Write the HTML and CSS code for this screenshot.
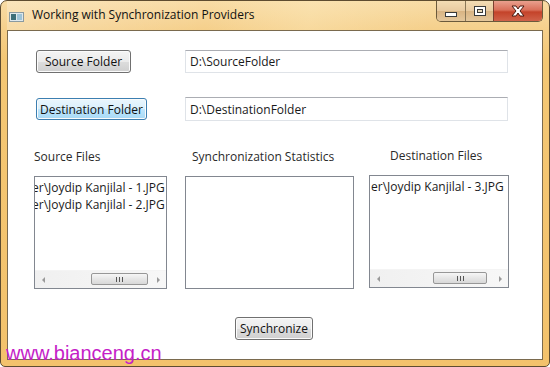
FILE: index.html
```html
<!DOCTYPE html>
<html lang="en">
<head>
    <meta charset="UTF-8">
    <title>Working with Synchronization Providers</title>
    <link rel="stylesheet" href="styles.css">
</head>
<body>

    <div class="window">

        <div class="titlebar">
            <svg class="appicon" width="15" height="10" viewBox="0 0 15 10">
                <rect x="0.5" y="0.5" width="14" height="9" fill="#dfe8ec" stroke="#8a9aa0"/>
                <rect x="2" y="2" width="5" height="6" fill="#3c6e78"/>
                <rect x="8" y="2" width="5" height="6" fill="#9ec4d8"/>
            </svg>
            <span class="title">Working with Synchronization Providers</span>

            <div class="captions">
                <div class="cap cap-min">
                    <svg width="12" height="6" viewBox="0 0 12 6"><rect x="0.5" y="1.5" width="11" height="4" fill="#fff" stroke="#3a3a3a"/></svg>
                </div>
                <div class="cap cap-max">
                    <svg width="12" height="10" viewBox="0 0 12 10"><rect x="0.5" y="0.5" width="11" height="9" fill="#fff" stroke="#3a3a3a"/><rect x="3.5" y="3.5" width="5" height="3" fill="#e8d8b8" stroke="#3a3a3a"/></svg>
                </div>
                <div class="cap cap-close">
                    <svg width="16" height="12" viewBox="0 0 16 12"><path d="M2 1 L6 1 L8 4 L10 1 L14 1 L10 6 L14 11 L10 11 L8 8 L6 11 L2 11 L6 6 Z" fill="#fff" stroke="#4a1a10" stroke-width="1"/></svg>
                </div>
            </div>
        </div>

        <div class="client">

            <div class="folder-row">
                <button class="btn btn-src">Source Folder</button>
                <div class="textbox">D:\SourceFolder</div>
            </div>

            <div class="folder-row row2">
                <button class="btn btn-focus">Destination Folder</button>
                <div class="textbox">D:\DestinationFolder</div>
            </div>

            <div class="lists">
                <div class="col col1">
                    <p class="label">Source Files</p>
                    <div class="listbox">
                        <div class="items shift">
                            <div>er\Joydip Kanjilal - 1.JPG</div>
                            <div>er\Joydip Kanjilal - 2.JPG</div>
                        </div>
                        <div class="hscroll">
                            <span class="arrow arrow-left"></span>
                            <span class="track"><span class="thumb thumb1"><span class="grip"></span></span></span>
                            <span class="arrow arrow-right"></span>
                        </div>
                    </div>
                </div>

                <div class="col col2">
                    <p class="label">Synchronization Statistics</p>
                    <div class="listbox"></div>
                </div>

                <div class="col col3">
                    <p class="label">Destination Files</p>
                    <div class="listbox">
                        <div class="items">
                            <div>er\Joydip Kanjilal - 3.JPG</div>
                        </div>
                        <div class="hscroll">
                            <span class="arrow arrow-left"></span>
                            <span class="track"><span class="thumb thumb3"><span class="grip"></span></span></span>
                            <span class="arrow arrow-right"></span>
                        </div>
                    </div>
                </div>
            </div>

            <div class="bottom">
                <button class="btn btn-sync">Synchronize</button>
            </div>

        </div>

        <div class="watermark">www.bianceng.cn</div>
    </div>

</body>
</html>
```

FILE: styles.css
```css
body{
    margin: 0;
    background: #ffffff;
    font-family: "Open Sans", "Noto Sans", sans-serif;
}

.window{
    position: relative;
    box-sizing: border-box;
    width: 550px;
    height: 367px;
    border: 1px solid #5e4c30;
    border-radius: 7px 7px 5px 5px;
    padding: 0 6px 6px 6px;
    background: linear-gradient(180deg, #f8dca6 0px, #f5cf8a 30px, #f4c774 60px, #f3c26c 100%);
    display: flex;
    flex-direction: column;
    overflow: hidden;
}

.titlebar{
    height: 29px;
    display: flex;
    align-items: flex-start;
    position: relative;
    background: linear-gradient(100deg, rgba(255,255,255,0.25) 0px, rgba(255,255,255,0) 200px, rgba(255,240,200,0.3) 300px, rgba(255,255,255,0) 420px);
}

.appicon{
    margin: 11px 0 0 2px;
}

.title{
    margin: 6px 0 0 8px;
    font-size: 12px;
    color: #111;
    line-height: 16px;
}

.captions{
    margin-left: auto;
    margin-right: 0;
    display: flex;
    height: 20px;
    border: 1px solid #6b5a3c;
    border-top: none;
    border-radius: 0 0 5px 5px;
    overflow: hidden;
}

.cap{
    display: flex;
    align-items: center;
    justify-content: center;
    height: 20px;
}

.cap-min{
    width: 28px;
    border-right: 1px solid #8a7858;
    background: linear-gradient(180deg, #f3dcb4 0%, #e8caa0 50%, #d9b483 51%, #e4c79c 100%);
}

.cap-min svg{
    margin-top: 6px;
}

.cap-max{
    width: 27px;
    border-right: 1px solid #7a4030;
    background: linear-gradient(180deg, #f3dcb4 0%, #e8caa0 50%, #d9b483 51%, #e4c79c 100%);
}

.cap-close{
    width: 48px;
    background: linear-gradient(180deg, #e9a08e 0%, #d9705a 45%, #c4432a 55%, #d0624a 100%);
}

.client{
    flex: 1;
    background: #ffffff;
    border: 1px solid #7a6a4e;
    padding-top: 19px;
    color: #2a2a2a;
    font-size: 12px;
}

.folder-row{
    display: grid;
    grid-template-columns: 149px 323px;
    padding-left: 28px;
    align-items: center;
    height: 23px;
}

.row2{
    margin-top: 24px;
    height: 24px;
}

.btn{
    font-family: "Open Sans", "Noto Sans", sans-serif;
    font-size: 12px;
    color: #111;
    height: 23px;
    padding: 0;
    white-space: nowrap;
    border: 1px solid #707070;
    border-radius: 3px;
    background: linear-gradient(180deg, #f4f4f4 0%, #ebebeb 50%, #dddddd 51%, #cfcfcf 100%);
    box-shadow: inset 0 0 0 1px #fbfbfb;
    justify-self: start;
    line-height: 19px;
}

.btn-src{
    width: 95px;
}

.btn-focus{
    width: 111px;
    height: 22px;
    border-color: #3c7fb1;
    background: linear-gradient(180deg, #eaf6fd 0%, #d9f0fc 50%, #bee6fd 51%, #a7d9f5 100%);
}

.textbox{
    box-sizing: border-box;
    height: 100%;
    border: 1px solid #dfe3e8;
    border-top-color: #abadb3;
    padding: 0 4px;
    display: flex;
    align-items: center;
    color: #1a1a1a;
}

.lists{
    display: flex;
    margin-top: 28px;
    height: 140px;
}

.col{
    display: flex;
    flex-direction: column;
}

.label{
    margin: 0 0 11px 0;
    height: 16px;
    line-height: 16px;
    color: #2a2a2a;
}

.col1{
    margin-left: 26px;
    width: 133px;
}

.col2{
    margin-left: 18px;
    width: 169px;
}

.col2 .label{
    padding-left: 7px;
}

.col3{
    margin-left: 15px;
    width: 140px;
    margin-top: -1px;
}

.col3 .label{
    padding-left: 21px;
}

.listbox{
    box-sizing: border-box;
    height: 113px;
    border: 1px solid #828790;
    display: flex;
    flex-direction: column;
    overflow: hidden;
}

.items{
    flex: 1;
    padding: 2px 0 0 1px;
    line-height: 17px;
    white-space: nowrap;
    overflow: hidden;
    color: #1a1a1a;
}

.shift{
    text-indent: -4px;
}

.hscroll{
    height: 17px;
    display: flex;
    background: linear-gradient(90deg, #f0f0f0, #f7f7f7);
    border-top: 1px solid #f4f4f4;
}

.arrow{
    width: 17px;
    position: relative;
}

.arrow::after{
    content: "";
    position: absolute;
    top: 6px;
    border-top: 3px solid transparent;
    border-bottom: 3px solid transparent;
}

.arrow-left::after{
    left: 7px;
    border-right: 3px solid #9a9a9a;
}

.arrow-right::after{
    left: 8px;
    border-left: 3px solid #9a9a9a;
}

.track{
    flex: 1;
    position: relative;
}

.thumb{
    position: absolute;
    top: 2px;
    height: 12px;
    box-sizing: border-box;
    border: 1px solid #979797;
    border-radius: 2px;
    background: linear-gradient(180deg, #f6f6f6 0%, #e6e6e6 50%, #d8d8d8 100%);
    display: flex;
    align-items: center;
    justify-content: center;
}

.thumb1{
    left: 39px;
    width: 57px;
}

.thumb3{
    left: 46px;
    width: 54px;
}

.grip{
    width: 7px;
    height: 5px;
    background: repeating-linear-gradient(90deg, #555 0px, #555 1px, transparent 1px, transparent 3px);
}

.bottom{
    display: flex;
    padding-left: 227px;
    margin-top: 28px;
}

.btn-sync{
    width: 78px;
}

.watermark{
    position: absolute;
    left: 5px;
    top: 342px;
    font-family: "Liberation Sans", Arial, sans-serif;
    font-size: 20px;
    line-height: 20px;
    color: #c51ec8;
}
```
